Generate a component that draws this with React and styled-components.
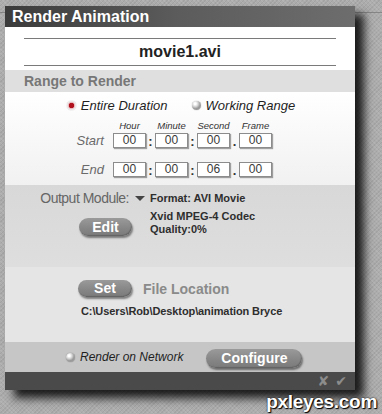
import React, { useState } from 'react';
import styled, { createGlobalStyle } from 'styled-components';

const GlobalStyle = createGlobalStyle`
  html, body {
    margin: 0;
    padding: 0;
  }
  body {
    font-family: "Liberation Sans", Arial, sans-serif;
    background-color: #adadad;
    background-image:
      linear-gradient(to bottom, transparent 12px, rgba(60,60,60,0.35) 12px, rgba(60,60,60,0.35) 13px, transparent 13px),
      repeating-linear-gradient(45deg, rgba(255,255,255,0.09) 0 1px, transparent 1px 3px),
      repeating-linear-gradient(-45deg, rgba(0,0,0,0.06) 0 1px, transparent 1px 3px);
  }
`;

const Page = styled.div`
  position: relative;
  width: 382px;
  height: 414px;
  box-sizing: border-box;
  padding: 6px 0 0 5px;
  overflow: hidden;
`;

const Window = styled.div`
  width: 350px;
  box-shadow: 9px 8px 9px rgba(0, 0, 0, 0.85);
`;

const TitleBar = styled.div`
  height: 21px;
  padding-left: 7px;
  background: linear-gradient(to right, #3b3b3b, #5c5c5c 50%, #6d6d6d);
  color: #fff;
  font-weight: bold;
  font-size: 16px;
  line-height: 21px;
`;

const NameSection = styled.div`
  background: #fff;
  height: 43px;
  padding: 11px 19px 0;
  box-sizing: border-box;
`;

const FileName = styled.div`
  border-top: 1px solid #7a7a7a;
  border-bottom: 1px solid #7a7a7a;
  height: 26px;
  text-align: center;
  font-weight: bold;
  font-size: 16px;
  line-height: 26px;
  color: #222;
`;

const SectionHeader = styled.div`
  height: 22px;
  padding-left: 19px;
  background: #dfdfdf;
  color: #777;
  font-weight: bold;
  font-size: 14px;
  line-height: 22px;
`;

const RangeBody = styled.div`
  height: 93px;
  box-sizing: border-box;
  padding-top: 6px;
  background: linear-gradient(to bottom, #ffffff, #f1f1f1);
`;

const RadioRow = styled.div`
  display: flex;
  justify-content: center;
  align-items: center;
  gap: 24px;
  height: 14px;
  padding-left: 2px;
`;

const RadioOption = styled.label`
  display: flex;
  align-items: center;
  gap: 5px;
  font-style: italic;
  font-size: ${p => p.$size || 13}px;
  color: #1f1f1f;
  cursor: pointer;
`;

const RadioDot = styled.span`
  width: 9px;
  height: 9px;
  border-radius: 50%;
  background: ${p =>
    p.$on
      ? 'radial-gradient(circle at 50% 50%, #b0101c 0 2.5px, #e8b6ba 3px, #f4f4f4 4.5px)'
      : 'radial-gradient(circle at 35% 30%, #ffffff 0 1px, #d2d2d2 3px, #9a9a9a 5px)'};
  box-shadow: 0 0 1px rgba(0, 0, 0, 0.45);
`;

const TimeRow = styled.div`
  display: grid;
  grid-template-columns: 108px 33px 9px 33px 9px 33px 9px 33px;
  align-items: center;
  margin-top: ${p => p.$top || 0}px;
  height: ${p => p.$h || 15}px;
`;

const RowLabel = styled.div`
  text-align: right;
  padding-right: 9px;
  font-style: italic;
  font-size: 13px;
  color: #6a6a6a;
`;

const ColHead = styled.div`
  text-align: center;
  font-style: italic;
  font-size: 9.5px;
  color: #333;
`;

const TimeBox = styled.div`
  height: 15px;
  box-sizing: border-box;
  border: 1px solid #8c8c8c;
  background: #fff;
  box-shadow: 1px 1px 1px rgba(0, 0, 0, 0.35);
  text-align: center;
  font-size: 12px;
  line-height: 13px;
  color: #3a3a3a;
`;

const Sep = styled.div`
  text-align: center;
  font-weight: bold;
  font-size: 13px;
  line-height: 15px;
  color: #333;
  padding-top: 2px;
`;

const OutputSection = styled.div`
  height: 82px;
  box-sizing: border-box;
  padding-top: 5px;
  background: linear-gradient(to bottom, #d8d8d8, #dedede);
  display: grid;
  grid-template-columns: 140px 1fr;
  grid-template-rows: 16px auto;
  column-gap: 5px;
  row-gap: 4px;
  align-content: start;
`;

const ModuleCell = styled.div`
  display: flex;
  justify-content: flex-end;
  align-items: center;
  gap: 6px;
  color: #666;
  font-size: 14px;
  letter-spacing: -0.5px;
`;

const Caret = styled.span`
  width: 0;
  height: 0;
  border-left: 5px solid transparent;
  border-right: 5px solid transparent;
  border-top: 5px solid #444;
`;

const Info = styled.div`
  font-weight: bold;
  font-size: 11px;
  line-height: 13px;
  color: #2e2e2e;
  align-self: center;
`;

const ButtonCell = styled.div`
  display: flex;
  justify-content: flex-end;
  padding-right: 13px;
  padding-top: 8px;
`;

const PillButton = styled.button`
  width: ${p => p.$w}px;
  height: ${p => p.$h || 18}px;
  padding: 0;
  border: none;
  border-radius: 10px;
  background: linear-gradient(to bottom, #9a9a9a, #858585 60%, #7a7a7a);
  box-shadow: 1px 2px 2px rgba(0, 0, 0, 0.45), inset -1px -1px 1px rgba(0, 0, 0, 0.2);
  color: #fff;
  font-family: "Liberation Sans", Arial, sans-serif;
  font-weight: bold;
  font-size: 14px;
  line-height: ${p => p.$h || 18}px;
  cursor: pointer;
`;

const FileSection = styled.div`
  height: 75px;
  box-sizing: border-box;
  padding: 13px 0 0 73px;
  background: #e5e5e5;
`;

const FileHead = styled.div`
  display: flex;
  align-items: center;
  gap: 11px;
  color: #8a8a8a;
  font-weight: bold;
  font-size: 14px;
`;

const PathText = styled.div`
  margin: 8px 0 0 3px;
  font-weight: bold;
  font-size: 11px;
  color: #2e2e2e;
  letter-spacing: -0.1px;
`;

const NetworkBand = styled.div`
  height: 30px;
  display: flex;
  align-items: center;
  padding-left: 61px;
  background: #c6c6c6;
`;

const ConfigureWrap = styled.div`
  margin-left: 23px;
  padding-top: 2px;
`;

const BottomBar = styled.div`
  height: 18px;
  background: #4a4a4a;
  display: flex;
  justify-content: flex-end;
  align-items: center;
  gap: 6px;
  padding-right: 8px;
  color: #8c8c8c;
  font-family: "DejaVu Sans", sans-serif;
  font-weight: bold;
  font-size: 14px;
  line-height: 18px;
`;

const Watermark = styled.div`
  position: absolute;
  right: 5px;
  bottom: 1px;
  color: #fff;
  font-weight: bold;
  font-size: 19px;
  letter-spacing: -0.3px;
  text-shadow: 0 0 2px #000, 1px 1px 1px #000;
`;

const heads = ['Hour', 'Minute', 'Second', 'Frame'];

const TimeFields = ({ label, values }) => (
  <TimeRow $top={label === 'End' ? 14 : 2}>
    <RowLabel>{label}</RowLabel>
    <TimeBox>{values[0]}</TimeBox>
    <Sep>:</Sep>
    <TimeBox>{values[1]}</TimeBox>
    <Sep>:</Sep>
    <TimeBox>{values[2]}</TimeBox>
    <Sep>.</Sep>
    <TimeBox>{values[3]}</TimeBox>
  </TimeRow>
);

const App = () => {
  const [range, setRange] = useState('entire');

  return (
    <Page>
      <GlobalStyle />
      <Window>
        <TitleBar>Render Animation</TitleBar>
        <NameSection>
          <FileName>movie1.avi</FileName>
        </NameSection>
        <SectionHeader>Range to Render</SectionHeader>
        <RangeBody>
          <RadioRow>
            <RadioOption onClick={() => setRange('entire')}>
              <RadioDot $on={range === 'entire'} />
              Entire Duration
            </RadioOption>
            <RadioOption onClick={() => setRange('working')}>
              <RadioDot $on={range === 'working'} />
              Working Range
            </RadioOption>
          </RadioRow>
          <TimeRow $top={8} $h={10}>
            <div />
            {heads.map((h, i) => (
              <React.Fragment key={h}>
                {i > 0 && <div />}
                <ColHead>{h}</ColHead>
              </React.Fragment>
            ))}
          </TimeRow>
          <TimeFields label="Start" values={['00', '00', '00', '00']} />
          <TimeFields label="End" values={['00', '00', '06', '00']} />
        </RangeBody>
        <OutputSection>
          <ModuleCell>
            Output Module:
            <Caret />
          </ModuleCell>
          <Info>Format: AVI Movie</Info>
          <ButtonCell>
            <PillButton $w={53}>Edit</PillButton>
          </ButtonCell>
          <Info>
            Xvid MPEG-4 Codec
            <br />
            Quality:0%
          </Info>
        </OutputSection>
        <FileSection>
          <FileHead>
            <PillButton $w={54} $h={17}>Set</PillButton>
            File Location
          </FileHead>
          <PathText>C:\Users\Rob\Desktop\animation Bryce</PathText>
        </FileSection>
        <NetworkBand>
          <RadioOption $size={12}>
            <RadioDot />
            Render on Network
          </RadioOption>
          <ConfigureWrap>
            <PillButton $w={96} $h={19}>Configure</PillButton>
          </ConfigureWrap>
        </NetworkBand>
        <BottomBar>
          <span>✘</span>
          <span>✔</span>
        </BottomBar>
      </Window>
      <Watermark>pxleyes.com</Watermark>
    </Page>
  );
};

export default App;
